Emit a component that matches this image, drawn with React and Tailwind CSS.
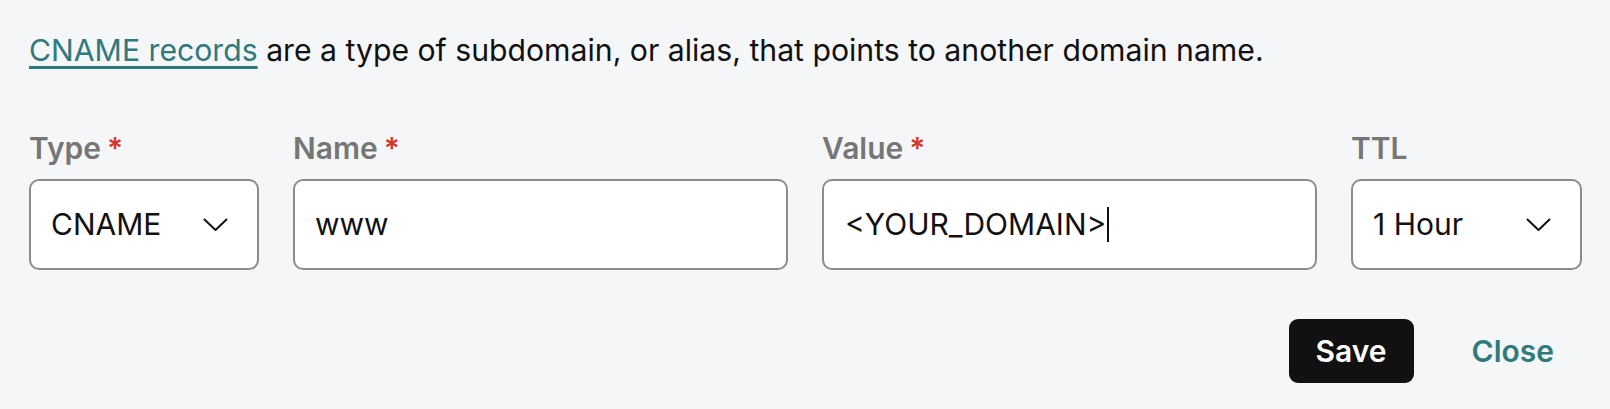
import React, { useState } from 'react';

const Chevron = () => (
  <svg width="25" height="14" viewBox="0 0 25 14" fill="none" className="shrink-0">
    <polyline points="1.5,1.5 12.5,12 23.5,1.5" stroke="#111" strokeWidth="2" strokeLinecap="round" strokeLinejoin="round" />
  </svg>
);

const Label = ({ text, required }) => (
  <label className="block text-[30px] leading-[36px] font-semibold text-[#767676] mb-[13px] mt-[1px]">
    {text}
    {required && <span className="text-[#d4382c] ml-[6px]">*</span>}
  </label>
);

const SelectBox = ({ value, width }) => (
  <div className={`${width} shrink-0`}>
    <div className="h-[91px] bg-white border-2 border-[#8c8c8c] rounded-[10px] flex items-center justify-between pl-[20px] pr-[29px] text-[30px] text-[#111]">
      <span>{value}</span>
      <Chevron />
    </div>
  </div>
);

export default function App() {
  const [name, setName] = useState('www');
  const [value] = useState('<YOUR_DOMAIN>');

  return (
    <div className="min-h-screen bg-[#f5f6f8] pl-[29px] pr-[28px] pt-[28px] font-['Inter',sans-serif] text-[#111]">
      <p className="text-[30.2px] leading-[45px]">
        <a href="#" className="text-[#2f7a7c] underline decoration-[3px] underline-offset-[5px]">
          CNAME records
        </a>{' '}
        are a type of subdomain, or alias, that points to another domain name.
      </p>

      <div className="mt-[56px] flex gap-[34px]">
        <div className="w-[230px] shrink-0">
          <Label text="Type" required />
          <SelectBox value="CNAME" width="w-[230px]" />
        </div>

        <div className="flex-1">
          <Label text="Name" required />
          <div className="h-[91px] bg-white border-2 border-[#8c8c8c] rounded-[10px] flex items-center pl-[20px] text-[30px]">
            <input
              value={name}
              onChange={(e) => setName(e.target.value)}
              className="w-full bg-transparent outline-none text-[#111]"
            />
          </div>
        </div>

        <div className="flex-1">
          <Label text="Value" required />
          <div className="h-[91px] bg-white border-2 border-[#8c8c8c] rounded-[10px] flex items-center pl-[21px] text-[30px]">
            <span className="text-[#111]">{value}</span>
            <span className="w-[2px] h-[35px] bg-[#111] ml-[1px]" />
          </div>
        </div>

        <div className="w-[231px] shrink-0">
          <Label text="TTL" />
          <SelectBox value="1 Hour" width="w-[231px]" />
        </div>
      </div>

      <div className="mt-[49px] flex justify-end items-center gap-[28px]">
        <button className="h-[64px] px-[27px] rounded-[9px] bg-[#111] text-white text-[30px] font-semibold">
          Save
        </button>
        <button className="h-[64px] pl-[30px] pr-[28px] text-[#2f7a7c] text-[30px] font-semibold">
          Close
        </button>
      </div>
    </div>
  );
}
